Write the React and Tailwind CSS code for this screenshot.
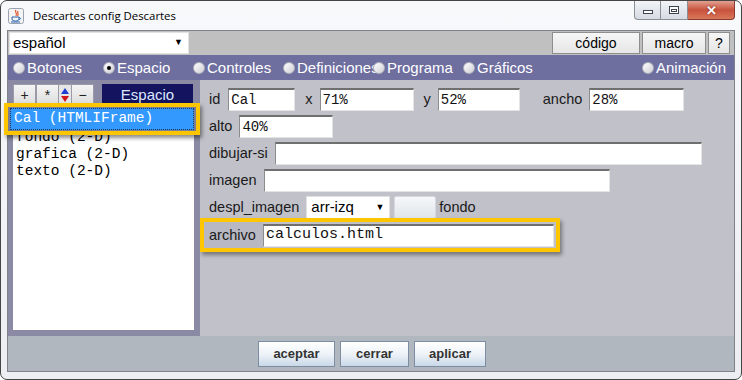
import React from "react";

const SANS = "font-['Liberation_Sans',Arial,sans-serif]";
const MONO = "font-['Liberation_Mono','Courier_New',monospace]";

function Field({ w, value = "", big = false }) {
  return (
    <div
      className={`${w} h-[23px] shrink-0 bg-white border border-t-2 border-t-[#6f6f6f] border-l-[#8c8c8c] border-r-[#e4e4e4] border-b-[#e4e4e4] flex items-center pl-[2px] ${MONO} ${big ? "text-[15px]" : "text-[14px]"} text-[#111] whitespace-nowrap overflow-hidden`}
    >
      {value}
    </div>
  );
}

function Radio({ label, checked }) {
  return (
    <div className="flex items-center w-[90px] shrink-0 whitespace-nowrap">
      <span className="relative z-10 w-[12px] h-[12px] shrink-0 rounded-full bg-linear-to-br from-white to-[#cfcfd6] border border-[#b0b0bc] flex items-center justify-center">
        {checked && <span className="w-[4px] h-[4px] rounded-full bg-black" />}
      </span>
      <span className="ml-[2px] text-white text-[15px] leading-none">{label}</span>
    </div>
  );
}

function Label({ children, cls = "" }) {
  return <span className={`text-[14.5px] text-[#1a1a1a] leading-none whitespace-nowrap ${cls}`}>{children}</span>;
}

function JavaIcon() {
  return (
    <svg width="16" height="16" viewBox="0 0 16 16">
      <rect x="0.5" y="0.5" width="15" height="15" rx="2" fill="#f4f4f4" stroke="#9aa3ad" />
      <path d="M8 2 C6 4 10 5 8 8 M10 3 C9 5 11 6 9.5 8" stroke="#e0522a" strokeWidth="1.2" fill="none" />
      <path d="M4 9 H11 V11 C11 12.5 9.5 13 7.5 13 C5.5 13 4 12.5 4 11 Z" fill="none" stroke="#2a64b0" strokeWidth="1" />
      <path d="M11 9.5 C13 9.5 13 11.5 11 11.5" fill="none" stroke="#2a64b0" strokeWidth="1" />
      <path d="M3 14 H12" stroke="#2a64b0" strokeWidth="1" />
    </svg>
  );
}

function TopButton({ children, w }) {
  return (
    <div className={`${w} h-[22px] border border-[#8e8e8e] bg-linear-to-b from-[#f6f6f6] to-[#e6e6e6] flex items-center justify-center text-[14px] text-black`}>
      {children}
    </div>
  );
}

function BottomButton({ children, w }) {
  return (
    <div className={`${w} h-[26px] border border-[#7d8ea2] bg-linear-to-b from-[#ffffff] via-[#eef3f8] to-[#c9d8e8] flex items-center justify-center text-[13px] font-bold text-[#333]`}>
      {children}
    </div>
  );
}

function ToolBtn({ children, w }) {
  return (
    <div className={`${w} h-[21px] border border-[#9a9aa8] bg-linear-to-b from-[#f4f4f4] to-[#dedede] flex items-center justify-center text-[14px] text-[#222] leading-none`}>
      {children}
    </div>
  );
}

export default function App() {
  return (
    <div className={`w-[742px] h-[380px] bg-white ${SANS} overflow-hidden`}>
      <div className="w-[742px] h-[380px] rounded-[7px] border border-[#454545] bg-linear-to-b from-[#f8f9fb] to-[#eceef2] flex flex-col">
        {/* Title bar */}
        <div className="h-[29px] flex items-start pl-[7px] pr-[6px]">
          <div className="h-[29px] flex items-center">
            <JavaIcon />
            <span className="ml-[9px] text-[11.4px] text-black font-['Open_Sans',sans-serif]">Descartes config Descartes</span>
          </div>
          <div className="ml-auto flex">
            <div className="w-[27px] h-[19px] rounded-bl-[4px] border border-t-0 border-[#8a8f96] bg-linear-to-b from-[#f2f4f7] to-[#d5dbe2] flex items-center justify-center">
              <span className="w-[10px] h-[4px] border border-[#3d4450] bg-white mt-[4px]" />
            </div>
            <div className="w-[27px] h-[19px] border border-t-0 border-l-0 border-[#8a8f96] bg-linear-to-b from-[#f2f4f7] to-[#d5dbe2] flex items-center justify-center">
              <span className="w-[10px] h-[8px] border border-[#3d4450] bg-white flex items-center justify-center">
                <span className="w-[6px] h-[3px] border border-[#3d4450]" />
              </span>
            </div>
            <div className="w-[47px] h-[19px] rounded-br-[4px] border border-t-0 border-l-0 border-[#8a3a30] bg-linear-to-b from-[#e0a090] via-[#c8513c] to-[#d8785a] flex items-center justify-center">
              <span className="text-white font-bold text-[13px] leading-none [text-shadow:0_0_2px_#6a1a10]">✕</span>
            </div>
          </div>
        </div>

        {/* Client area */}
        <div className="mx-[6px] h-[342px] border border-[#7f8288] flex flex-col">
          {/* top row */}
          <div className="h-[24px] bg-[#c0c0c0] flex items-start pt-[1px] pl-[1px] pr-[4px]">
            <div className="w-[180px] h-[22px] bg-white border border-[#e2e2e2] flex items-center pl-[3px] pr-[5px]">
              <span className="text-[15px] text-black">español</span>
              <span className="ml-auto text-[9px] text-black">▼</span>
            </div>
            <div className="ml-auto flex gap-[2px]">
              <TopButton w="w-[88px]">código</TopButton>
              <TopButton w="w-[64px]">macro</TopButton>
              <TopButton w="w-[22px]">?</TopButton>
            </div>
          </div>

          {/* radio row */}
          <div className="h-[25px] bg-[#6e6e9f] flex items-center pl-[5px]">
            <Radio label="Botones" />
            <Radio label="Espacio" checked />
            <Radio label="Controles" />
            <Radio label="Definiciones" />
            <Radio label="Programa" />
            <Radio label="Gráficos" />
            <div className="ml-auto mr-[8px] flex">
              <div className="flex items-center whitespace-nowrap">
                <span className="w-[12px] h-[12px] rounded-full bg-linear-to-br from-white to-[#cfcfd6] border border-[#b0b0bc]" />
                <span className="ml-[2px] text-white text-[15px] leading-none">Animación</span>
              </div>
            </div>
          </div>

          {/* main */}
          <div className="h-[256px] flex">
            {/* left panel */}
            <div className="relative w-[192px] bg-[#8a8aa4] flex flex-col pl-[5px] pr-[6px] pt-[4px] pb-[6px]">
              <div className="h-[22px] flex items-start">
                <ToolBtn w="w-[23px]">+</ToolBtn>
                <ToolBtn w="w-[23px]">*</ToolBtn>
                <div className="w-[12px] h-[21px] flex flex-col items-center justify-center bg-[#e6e6e6] border-y border-[#9a9aa8]">
                  <svg width="10" height="16" viewBox="0 0 10 16">
                    <path d="M5 1 L9 7 H1 Z" fill="#1f3fd0" />
                    <path d="M5 15 L9 9 H1 Z" fill="#d01a1a" />
                  </svg>
                </div>
                <ToolBtn w="w-[23px]">−</ToolBtn>
                <div className="ml-[8px] w-[91px] h-[22px] bg-[#13135f] flex items-center justify-center text-[15px] text-[#dce8ff]">
                  Espacio
                </div>
              </div>
              <div className="mt-[1px] flex-1 bg-white pt-[22px] pl-[3px]">
                {["fondo (2-D)", "grafica (2-D)", "texto (2-D)"].map((t) => (
                  <div key={t} className={`h-[17px] leading-[17px] ${MONO} text-[14.5px] text-black whitespace-nowrap`}>
                    {t}
                  </div>
                ))}
              </div>

              {/* selected item annotation */}
              <div className="absolute left-[-4px] top-[23px] w-[196px] h-[32px] border-4 border-[#fec600] bg-[#7c7c94] pl-[2px] pt-[1px] pr-[2px] shadow-[2px_3px_4px_rgba(0,0,0,0.45)]">
                <div className="w-full h-[22px] bg-[#3399ff] border border-dotted border-[#1a3a66] flex items-center pl-[3px]">
                  <span className={`${MONO} text-[14.5px] text-white whitespace-nowrap`}>Cal (HTMLIFrame)</span>
                </div>
              </div>
            </div>

            {/* right panel */}
            <div className="flex-1 bg-[#c1c1c9] pl-[9px] pt-[8px] flex flex-col">
              <div className="h-[23px] flex items-center">
                <Label>id</Label>
                <div className="ml-[8px]"><Field w="w-[67px]" value="Cal" /></div>
                <Label cls="ml-[10px]">x</Label>
                <div className="ml-[7px]"><Field w="w-[94px]" value="71%" /></div>
                <Label cls="ml-[10px]">y</Label>
                <div className="ml-[7px]"><Field w="w-[82px]" value="52%" /></div>
                <Label cls="ml-[23px]">ancho</Label>
                <div className="ml-[7px]"><Field w="w-[95px]" value="28%" /></div>
              </div>
              <div className="mt-[4px] h-[23px] flex items-center">
                <Label>alto</Label>
                <div className="ml-[7px]"><Field w="w-[94px]" value="40%" /></div>
              </div>
              <div className="mt-[4px] h-[23px] flex items-center">
                <Label>dibujar-si</Label>
                <div className="ml-[7px]"><Field w="w-[427px]" /></div>
              </div>
              <div className="mt-[4px] h-[23px] flex items-center">
                <Label>imagen</Label>
                <div className="ml-[7px]"><Field w="w-[346px]" /></div>
              </div>
              <div className="mt-[4px] h-[23px] flex items-center">
                <Label>despl_imagen</Label>
                <div className="ml-[7px] w-[84px] h-[23px] bg-white border border-[#e0e0e0] flex items-center pl-[4px] pr-[5px]">
                  <span className="text-[15px] text-black">arr-izq</span>
                  <span className="ml-auto text-[9px] text-black">▼</span>
                </div>
                <div className="ml-[4px] w-[42px] h-[23px] rounded-[2px] border border-[#d4dae0] bg-linear-to-b from-[#f6f8fa] to-[#dfe5ea]" />
                <Label cls="ml-[3px]">fondo</Label>
              </div>
              <div className="-ml-[9px] -mt-[1px] w-[360px] h-[34px] border-4 border-[#fec600] shadow-[2px_3px_4px_rgba(0,0,0,0.4)] flex items-center pr-[2px]">
                <div className="w-[59px] h-full bg-[#b8b8c2] flex items-center pl-[5px]">
                  <Label>archivo</Label>
                </div>
                <Field w="flex-1" value="calculos.html" big />
              </div>
            </div>
          </div>

          {/* bottom bar */}
          <div className="flex-1 bg-[#b0b7be] flex items-center justify-center gap-[5px] pl-[2px]">
            <BottomButton w="w-[77px]">aceptar</BottomButton>
            <BottomButton w="w-[69px]">cerrar</BottomButton>
            <BottomButton w="w-[72px]">aplicar</BottomButton>
          </div>
        </div>
      </div>
    </div>
  );
}
